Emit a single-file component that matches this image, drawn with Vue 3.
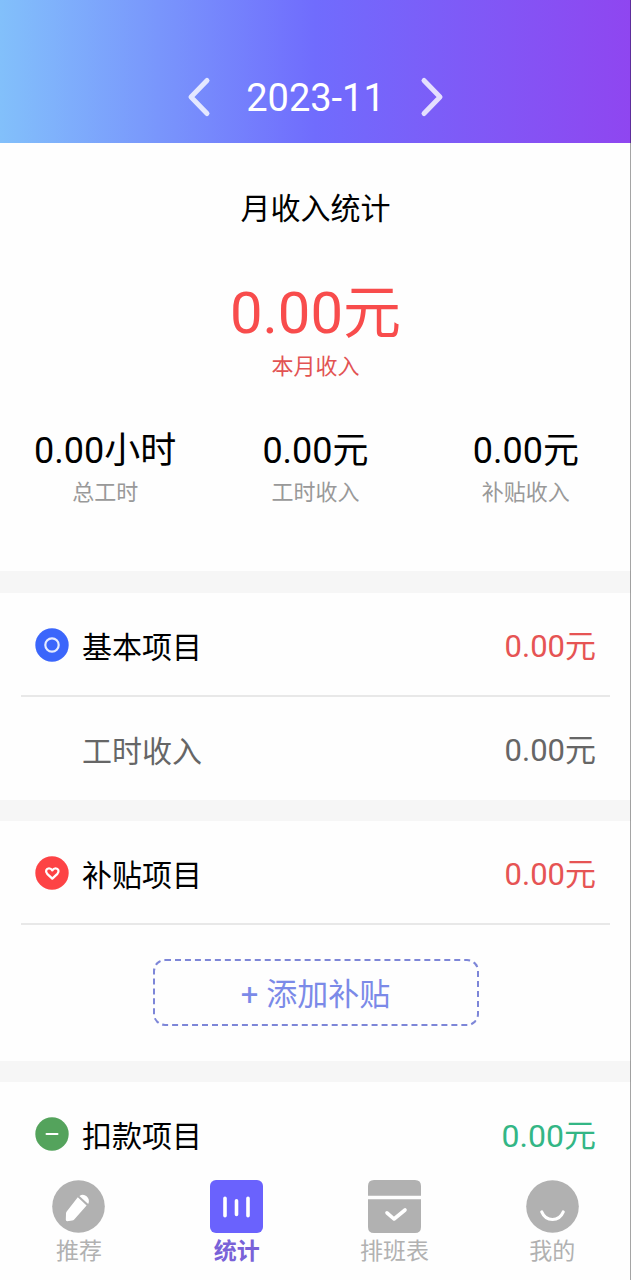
<script setup>
import { ref } from 'vue'

const month = ref('2023-11')
const stats = [
  { value: '0.00小时', label: '总工时' },
  { value: '0.00元', label: '工时收入' },
  { value: '0.00元', label: '补贴收入' },
]
const tabs = [
  { id: 'recommend', label: '推荐' },
  { id: 'stats', label: '统计' },
  { id: 'schedule', label: '排班表' },
  { id: 'mine', label: '我的' },
]
const active = ref('stats')

function shift(step) {
  const [y, m] = month.value.split('-').map(Number)
  const d = new Date(y, m - 1 + step, 1)
  month.value = `${d.getFullYear()}-${String(d.getMonth() + 1).padStart(2, '0')}`
}
</script>

<template>
  <div class="page">
    <header class="top">
      <button class="arrow" type="button" aria-label="上个月" @click="shift(-1)">
        <svg width="26" height="42" viewBox="0 0 26 42"><path d="M21 4.500L5 21L21 37.500" /></svg>
      </button>
      <h1 class="month">{{ month }}</h1>
      <button class="arrow" type="button" aria-label="下个月" @click="shift(1)">
        <svg width="26" height="42" viewBox="0 0 26 42"><path d="M5 4.500L21 21L5 37.500" /></svg>
      </button>
    </header>

    <main class="content">
      <section class="summary">
        <h2 class="title">月收入统计</h2>
        <p class="total">0.00元</p>
        <p class="total-label">本月收入</p>
        <ul class="stats">
          <li v-for="s in stats" :key="s.label">
            <span class="stat-value">{{ s.value }}</span>
            <span class="stat-label">{{ s.label }}</span>
          </li>
        </ul>
      </section>

      <section class="group">
        <div class="row head">
          <svg class="badge" viewBox="0 0 34 34">
            <circle cx="17" cy="17" r="16.700" fill="#3b66fb" />
            <circle cx="17" cy="17" r="6.700" fill="none" stroke="#e6ecff" stroke-width="2.200" />
          </svg>
          <h3>基本项目</h3>
          <span class="amount red">0.00元</span>
        </div>
        <div class="row sub">
          <span class="name">工时收入</span>
          <span class="amount">0.00元</span>
        </div>
      </section>

      <section class="group">
        <div class="row head">
          <svg class="badge" viewBox="0 0 34 34">
            <circle cx="17" cy="17" r="16.700" fill="#fd4345" />
            <path d="M17.300 22.600L12.200 17.800C10 15.500 11.300 12.300 14 12.300C15.600 12.300 16.600 13.200 17.300 14.300C18 13.200 19 12.300 20.600 12.300C23.300 12.300 24.600 15.500 22.400 17.800Z" fill="none" stroke="#fff" stroke-width="2.300" stroke-linejoin="round" />
          </svg>
          <h3>补贴项目</h3>
          <span class="amount red">0.00元</span>
        </div>
        <div class="add-wrap">
          <button class="add" type="button">+ 添加补贴</button>
        </div>
      </section>

      <section class="group">
        <div class="row last">
          <svg class="badge" viewBox="0 0 34 34">
            <circle cx="17" cy="17" r="16.700" fill="#54a35c" />
            <path d="M11.500 17H22.500" stroke="#fff" stroke-width="2" stroke-linecap="round" />
          </svg>
          <h3>扣款项目</h3>
          <span class="amount green">0.00元</span>
        </div>
      </section>
    </main>

    <nav class="tabs">
      <button
        v-for="t in tabs"
        :key="t.id"
        type="button"
        class="tab"
        :class="{ on: active === t.id }"
        @click="active = t.id"
      >
        <svg v-if="t.id === 'recommend'" viewBox="0 0 53 53">
          <circle cx="26.500" cy="26.500" r="26.300" fill="currentColor" />
          <path d="M25.800 17.300L34.600 25.600L22 39.800Q21.300 40.600 20.200 40.600L15.200 41.200Q13.800 41.200 13.800 39.800L14 33.600Q14 32.500 14.700 31.600Z" fill="#fff" />
          <path d="M27.400 15.900Q31.300 13.200 34.600 16.300Q38.200 19.500 36.200 24Z" fill="#fff" />
        </svg>
        <svg v-else-if="t.id === 'stats'" viewBox="0 0 53 53">
          <rect width="53" height="53" rx="6" fill="#6a62fd" />
          <path d="M15 18.200V35.800M26.500 20.800V34.500M38 18.200V35.800" stroke="#fff" stroke-width="3.600" stroke-linecap="round" />
        </svg>
        <svg v-else-if="t.id === 'schedule'" viewBox="0 0 53 53">
          <path d="M0 15.800V6Q0 0 6 0H47Q53 0 53 6V15.800ZM0 19.200H53V47Q53 53 47 53H6Q0 53 0 47Z" fill="currentColor" />
          <path d="M19 32.800L26 39L37 30" fill="none" stroke="#fff" stroke-width="3.600" stroke-linecap="round" stroke-linejoin="round" />
        </svg>
        <svg v-else viewBox="0 0 53 53">
          <circle cx="26.500" cy="26.500" r="26.300" fill="currentColor" />
          <path d="M15.800 32C20 42 33 42 37.200 32" fill="none" stroke="#fff" stroke-width="3.200" stroke-linecap="round" />
        </svg>
        <span>{{ t.label }}</span>
      </button>
    </nav>
  </div>
</template>

<style>
body {
  margin: 0;
  background: #fefefe;
}
</style>

<style scoped>
.page {
  position: relative;
  display: flex;
  flex-direction: column;
  min-height: 100vh;
  background: #fefefe;
  color: #000;
  font-family: Roboto, "Noto Sans CJK SC", sans-serif;
}
.page::after {
  content: "";
  position: absolute;
  top: 0;
  right: 0;
  bottom: 0;
  width: 1px;
  background: rgba(0, 0, 0, 0.35);
  z-index: 2;
}
h1, h2, h3, p, ul {
  margin: 0;
  padding: 0;
  font-weight: 400;
}
button {
  padding: 0;
  border: 0;
  background: none;
  font: inherit;
  color: inherit;
  cursor: pointer;
}
.top {
  display: flex;
  justify-content: center;
  align-items: center;
  gap: 34px;
  padding: 72px 0 21px;
  background: linear-gradient(90deg, #82c0fb 0%, #706cfd 50%, #8f46f0 100%);
  color: #fff;
}
.arrow {
  display: flex;
  align-items: center;
  height: 48px;
}
.arrow path {
  fill: none;
  stroke: #fff;
  stroke-opacity: 0.8;
  stroke-width: 5;
  stroke-linecap: round;
  stroke-linejoin: round;
}
.top .month {
  padding-top: 2px;
  font-size: 38px;
  line-height: 48px;
}
.summary {
  padding: 44px 0 62px;
  text-align: center;
}
.title {
  font-size: 30px;
  line-height: 44px;
}
.total {
  margin-top: 44px;
  font-size: 58px;
  line-height: 76px;
  color: #f84c4c;
}
.total-label {
  font-size: 22px;
  line-height: 32px;
  color: #e25353;
}
.stats {
  display: grid;
  grid-template-columns: repeat(3, 1fr);
  margin-top: 44px;
  list-style: none;
}
.stat-value,
.stat-label {
  display: block;
}
.stat-value {
  font-size: 36px;
  line-height: 48px;
}
.stat-label {
  margin-top: 2px;
  font-size: 22px;
  line-height: 32px;
  color: #999;
}
.group {
  border-top: 21px solid #f6f6f6;
}
.summary + .group {
  border-top-width: 22px;
}
.row {
  display: flex;
  align-items: center;
  box-sizing: border-box;
  height: 104px;
  margin: 0 21px;
  padding: 2px 14px 0;
}
.row.head {
  border-bottom: 2px solid #e8e8e8;
}
.row.last {
  height: 98px;
  padding-top: 5px;
}
.badge {
  width: 34px;
  height: 34px;
  margin-right: 13px;
}
h3,
.name {
  padding-top: 6px;
  font-size: 30px;
  line-height: 44px;
}
.row.sub {
  height: 103px;
  padding: 0 14px 0 61px;
  color: #666;
}
.amount {
  margin-left: auto;
  padding-top: 4px;
  font-size: 31px;
  line-height: 44px;
}
.red {
  color: #e65454;
}
.green {
  font-size: 32px;
  color: #33b685;
}
.add-wrap {
  display: flex;
  justify-content: center;
  padding: 34px 0 35px;
}
.add {
  box-sizing: border-box;
  width: min(326px, 80%);
  height: 67px;
  padding-top: 4px;
  border: 2px dashed #7d86d8;
  border-radius: 12px;
  font-size: 31px;
  line-height: 44px;
  color: #7b8ae8;
}
.tabs {
  position: sticky;
  bottom: 0;
  display: grid;
  grid-template-columns: repeat(4, 1fr);
  margin-top: auto;
  padding-bottom: 10px;
  background: #fefefe;
}
.tab {
  display: flex;
  flex-direction: column;
  align-items: center;
  color: #b1b1b1;
  font-size: 23px;
  line-height: 37px;
}
.tab svg {
  width: 53px;
  height: 53px;
}
.on {
  color: #7962d8;
  font-weight: 700;
}
</style>
